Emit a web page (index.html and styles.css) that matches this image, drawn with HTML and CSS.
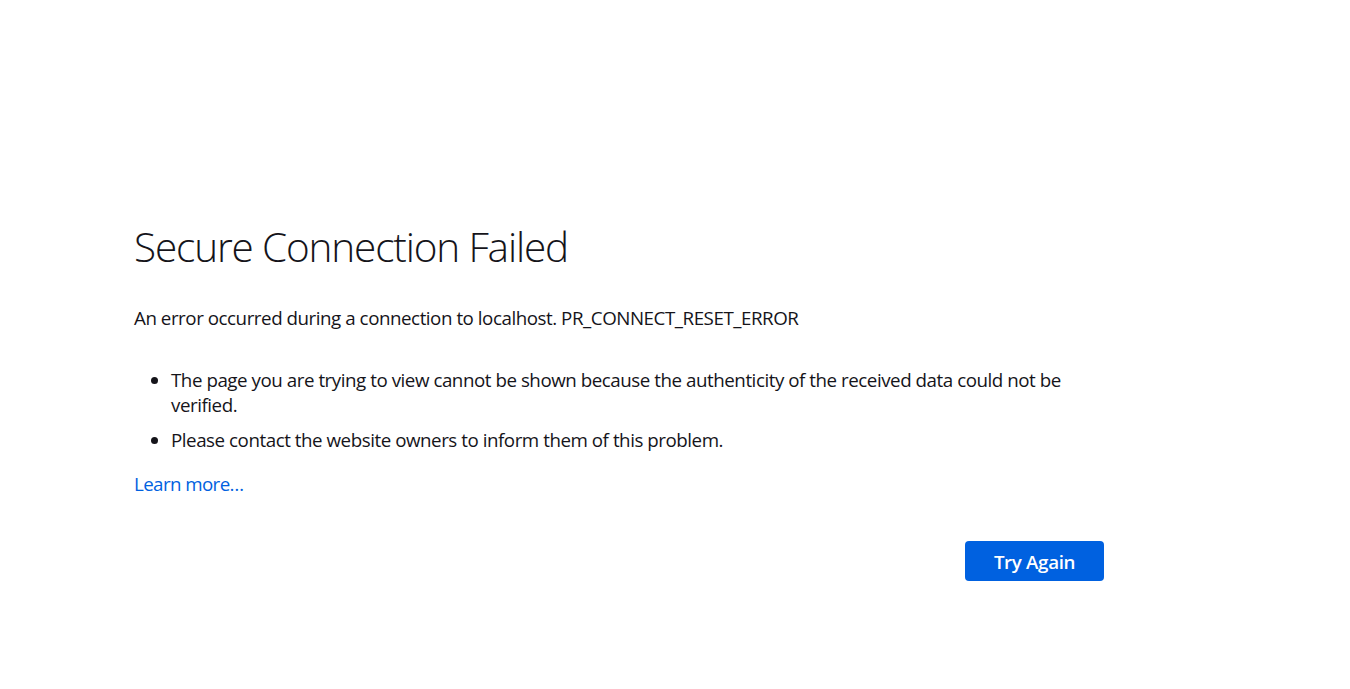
FILE: index.html
```html
<!DOCTYPE html>
<html lang="en">
<head>
<meta charset="utf-8">
<title>Secure Connection Failed</title>
<link rel="stylesheet" href="styles.css">
</head>
<body>
<main class="page">
  <div class="container">
    <h1 class="title">Secure Connection Failed</h1>
    <p class="short-desc">An error occurred during a connection to localhost. PR_CONNECT_RESET_ERROR</p>
    <ul class="long-desc">
      <li>The page you are trying to view cannot be shown because the authenticity of the received data could not be verified.</li>
      <li>Please contact the website owners to inform them of this problem.</li>
    </ul>
    <a class="learn-more" href="#">Learn more…</a>
    <div class="actions">
      <button class="primary" type="button">Try Again</button>
    </div>
  </div>
</main>
</body>
</html>
```

FILE: styles.css
```css
html, body {
  margin: 0;
  padding: 0;
  background: #ffffff;
}

body {
  font-family: "Open Sans", "Noto Sans", sans-serif;
  font-size: 18.75px;
  line-height: 25px;
  letter-spacing: -0.46px;
  color: #15141a;
}

.page {
  display: flex;
  padding: 222px 0 0 134px;
}

.container {
  width: 970px;
  display: flex;
  flex-direction: column;
  align-items: flex-start;
}

.title {
  margin: 0;
  font-size: 40.5px;
  line-height: 49px;
  font-weight: 300;
  letter-spacing: -1.15px;
}

.short-desc {
  margin: 34px 0 0;
}

.long-desc {
  margin: 37px 0 0;
  padding: 0 0 0 37px;
}

.long-desc li + li {
  margin-top: 10px;
}

.learn-more {
  margin-top: 19px;
  color: #0061e0;
  text-decoration: none;
  letter-spacing: -0.6px;
}

.actions {
  align-self: stretch;
  display: flex;
  justify-content: flex-end;
  margin-top: 45px;
}

.primary {
  width: 139px;
  height: 40px;
  border: none;
  border-radius: 4px;
  background: #0061e0;
  color: #ffffff;
  font-family: inherit;
  font-size: 18.75px;
  font-weight: 600;
  letter-spacing: -0.35px;
  padding: 0;
}
```
